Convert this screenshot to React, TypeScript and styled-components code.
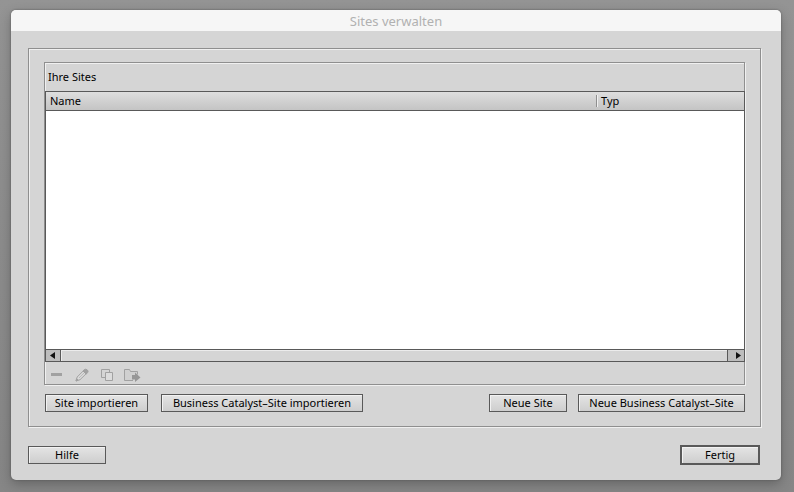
import React from 'react';
import styled, { createGlobalStyle } from 'styled-components';

const EDGE = '#8f8f8f';
const LIGHT = '#f0f0f0';
const FRAME = '#595959';

const GlobalStyle = createGlobalStyle`
  *, *::before, *::after { box-sizing: border-box; }
  body { margin: 0; background: #8f8f8f; }
  body, button, table {
    font-family: 'Noto Sans', 'Open Sans', sans-serif;
    font-size: 11px;
    line-height: 16px;
    color: #000;
  }
`;

const Desktop = styled.div`
  min-height: 100vh;
  display: flex;
  padding: 10px 13px 12px 11px;
  background: linear-gradient(#949494, #8c8c8c 50%, #868686);
`;

const Dialog = styled.section`
  flex: 1;
  min-width: 0;
  display: flex;
  flex-direction: column;
  border-radius: 5px;
  overflow: hidden;
  background: #d5d5d5;
  box-shadow: 0 0 2px #555, 0 4px 12px rgba(0, 0, 0, 0.25);
`;

const TitleBar = styled.h1`
  margin: 0;
  height: 21px;
  flex: none;
  background: #f6f6f6;
  color: #b1b1b1;
  font-size: 13px;
  line-height: 22px;
  font-weight: 400;
  text-align: center;
`;

const Content = styled.div`
  flex: 1;
  display: flex;
  flex-direction: column;
  padding: 17px 20px 15px 17px;
`;

const Group = styled.div`
  flex: 1;
  display: flex;
  flex-direction: column;
  border: 1px solid ${EDGE};
  box-shadow: 1px 1px 0 ${LIGHT}, inset 1px 1px 0 ${LIGHT};
`;

const OuterGroup = styled(Group)`
  padding: 13px 15px 14px;
`;

const Caption = styled.h2`
  margin: 0;
  padding: 6px 3px;
  font-size: 11px;
  line-height: 16px;
  font-weight: 400;
`;

const ListFrame = styled.div`
  flex: 1;
  display: flex;
  flex-direction: column;
  border: 1px solid ${FRAME};
  border-right-width: 0;
  box-shadow: 1px 0 0 ${FRAME};
  background: #fff;
`;

const SiteTable = styled.table`
  width: 100%;
  border-spacing: 0;
  table-layout: fixed;
`;

const HeadCell = styled.th<{ $width?: number }>`
  width: ${({ $width }) => ($width ? `${$width}px` : 'auto')};
  height: 19px;
  padding: 0 4px;
  border-bottom: 1px solid ${FRAME};
  background: linear-gradient(#dedede, #c4c4c4);
  font-weight: 400;
  text-align: left;
`;

const Divided = styled.span`
  display: block;
  margin-left: -4px;
  padding-left: 4px;
  line-height: 12px;
  border-left: 1px solid ${EDGE};
  box-shadow: inset 1px 0 0 ${LIGHT};
`;

const ScrollBar = styled.div`
  display: flex;
  height: 12px;
  margin-top: auto;
  border-top: 1px solid ${FRAME};
  background: #d5d5d5;
`;

const Track = styled.div`
  flex: 1;
  box-shadow: inset 1px 1px 0 #ececec;
`;

const ArrowButton = styled.button<{ $side: 'left' | 'right' }>`
  width: ${({ $side }) => ($side === 'left' ? 15 : 17)}px;
  padding: ${({ $side }) => ($side === 'left' ? '0 2px 0 0' : '0 0 0 5px')};
  display: flex;
  align-items: center;
  justify-content: center;
  border: 0 solid ${FRAME};
  border-${({ $side }) => ($side === 'left' ? 'right' : 'left')}-width: 1px;
  background: #bdbdbd;
`;

const Tools = styled.div`
  display: flex;
  gap: 8px;
  padding: 5px 3px 0 4px;
  height: 22px;
`;

const ToolButton = styled.button`
  width: 17px;
  height: 17px;
  padding: 0;
  border: 0;
  background: none;
  svg { display: block; }
`;

const Row = styled.div`
  display: flex;
  align-items: center;
`;

const SiteActions = styled(Row)`
  padding: 9px 0 0 1px;
`;

const Footer = styled(Row)`
  justify-content: space-between;
  padding: 18px 1px 0 0;
`;

const Spacer = styled.div`
  flex: 1;
`;

const Button = styled.button<{ $width?: number; $gap?: number; $primary?: boolean }>`
  height: ${({ $primary }) => ($primary ? 20 : 18)}px;
  min-width: ${({ $width = 78 }) => $width}px;
  margin-left: ${({ $gap = 0 }) => $gap}px;
  padding: 0 4px;
  border: ${({ $primary }) => ($primary ? 2 : 1)}px solid ${FRAME};
  background: linear-gradient(#e4e4e4, #cecece);
  box-shadow: inset 1px 1px 0 #f2f2f2;
  line-height: 16px;
  white-space: nowrap;
`;

function Arrow({ left }: { left?: boolean }) {
  return (
    <svg width="5" height="7" viewBox="0 0 5 7" aria-hidden="true">
      <path d={left ? 'M5 0v7L0 3.5z' : 'M0 0v7l5-3.5z'} fill="#111" />
    </svg>
  );
}

function ToolIcon({ children }: { children: React.ReactNode }) {
  return (
    <svg width="17" height="17" viewBox="0 0 17 17" fill="none" stroke="#a1a1a1" aria-hidden="true">
      {children}
    </svg>
  );
}

export default function App() {
  return (
    <>
      <GlobalStyle />
      <Desktop>
        <Dialog aria-labelledby="title">
          <TitleBar id="title">Sites verwalten</TitleBar>
          <Content>
            <OuterGroup>
              <Group>
                <Caption>Ihre Sites</Caption>
                <ListFrame>
                  <SiteTable>
                    <thead>
                      <tr>
                        <HeadCell>Name</HeadCell>
                        <HeadCell $width={148}>
                          <Divided>Typ</Divided>
                        </HeadCell>
                      </tr>
                    </thead>
                    <tbody />
                  </SiteTable>
                  <ScrollBar>
                    <ArrowButton $side="left" aria-label="Nach links">
                      <Arrow left />
                    </ArrowButton>
                    <Track />
                    <ArrowButton $side="right" aria-label="Nach rechts">
                      <Arrow />
                    </ArrowButton>
                  </ScrollBar>
                </ListFrame>
                <Tools>
                  <ToolButton aria-label="Site entfernen" disabled>
                    <ToolIcon>
                      <path d="M2 7.5h11" strokeWidth="3" />
                    </ToolIcon>
                  </ToolButton>
                  <ToolButton aria-label="Site bearbeiten" disabled>
                    <ToolIcon>
                      <path d="M2 14l1.200-4 6-6 3 2.700-6.200 6z" fill="#dadada" />
                      <path d="M5 11l5-5" stroke="#bbb" />
                      <path d="M9 4l1.300-1.400q1.500-1 3 .3t.3 2.700l-1.400 1.500z" fill="#a1a1a1" />
                      <path d="M2 14l.6-2.200 1.500 1.300z" fill="#a1a1a1" />
                    </ToolIcon>
                  </ToolButton>
                  <ToolButton aria-label="Site duplizieren" disabled>
                    <ToolIcon>
                      <path d="M6.500 10.500h-4v-8h8v3" />
                      <path d="M6.500 5.500h7v8h-7z" fill="#dcdcdc" />
                    </ToolIcon>
                  </ToolButton>
                  <ToolButton aria-label="Site exportieren" disabled>
                    <ToolIcon>
                      <path d="M9 13.500h-8.500v-11h5l1 2h7v3" fill="#d0d0d0" />
                      <path d="M8 8h3v-2.500l5.500 5-5.500 4.500v-2.500h-3z" fill="#979797" stroke="none" />
                    </ToolIcon>
                  </ToolButton>
                </Tools>
              </Group>
              <SiteActions>
                <Button $width={103}>Site importieren</Button>
                <Button $width={202} $gap={13}>Business Catalyst–Site importieren</Button>
                <Spacer />
                <Button>Neue Site</Button>
                <Button $width={167} $gap={11}>Neue Business Catalyst–Site</Button>
              </SiteActions>
            </OuterGroup>
            <Footer>
              <Button>Hilfe</Button>
              <Button $width={80} $primary>Fertig</Button>
            </Footer>
          </Content>
        </Dialog>
      </Desktop>
    </>
  );
}
